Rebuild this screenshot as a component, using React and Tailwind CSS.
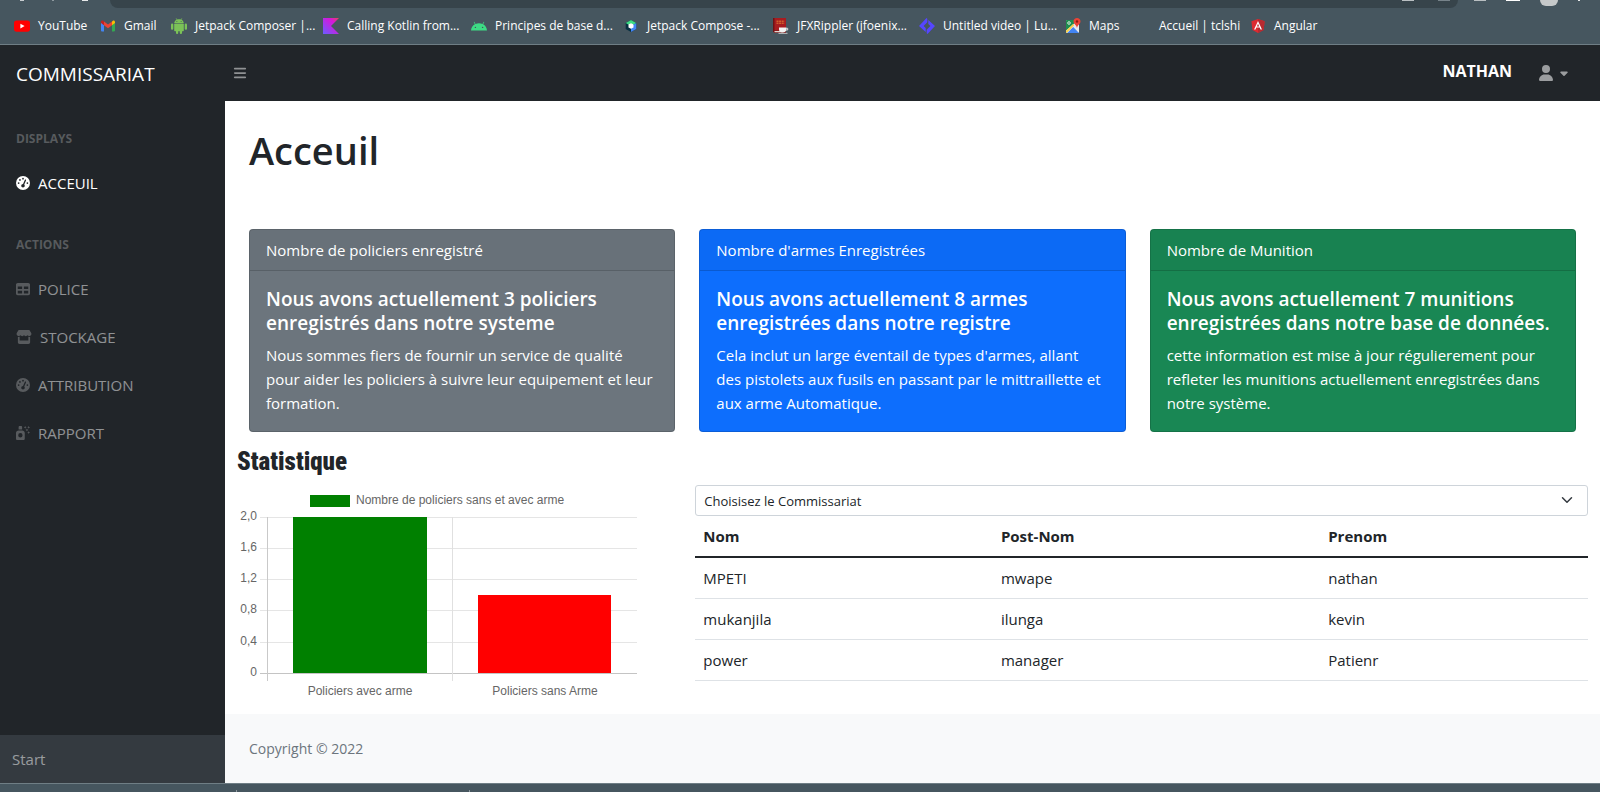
import React from "react";
import { FaBars, FaGaugeHigh, FaTable, FaStore, FaSprayCanSparkles, FaUser, FaCaretDown } from "react-icons/fa6";

const YoutubeIcon = () => (
  <svg viewBox="0 0 16 16" className="size-4 shrink-0">
    <rect x="0" y="2.5" width="16" height="11.2" rx="2.6" fill="#f00" />
    <path d="M6.4 5.7 10.6 8l-4.2 2.4z" fill="#fff" />
  </svg>
);

const GmailIcon = () => (
  <svg viewBox="0 0 16 16" className="size-4 shrink-0">
    <path d="M1 4v8.6c0 .5.4.9.9.9H4V7z" fill="#4285f4" />
    <path d="M15 4v8.6c0 .5-.4.9-.9.9H12V7z" fill="#34a853" />
    <path d="M12 3.6V7.2L15 5V4c0-1.500-1.500-2-2.400-1.100z" fill="#fbbc04" />
    <path d="M4 7.200V3.600L8 6.600l4-3v3.600l-4 3z" fill="#ea4335" />
    <path d="M1 4v1l3 2.200V3.600l-.6-.7C2.500 2 1 2.500 1 4z" fill="#c5221f" />
  </svg>
);

const AndroidIcon = () => (
  <svg viewBox="0 0 16 16" className="size-4 shrink-0" fill="#7bc257">
    <path d="M3.200 5.200C3.300 3.600 4.200 2.400 5.500 1.700L4.700.3l.4-.2.8 1.400c1.300-.5 2.900-.5 4.200 0l.8-1.400.4.2-.8 1.400c1.300.7 2.200 1.900 2.300 3.500z" />
    <rect x="3.200" y="5.700" width="9.600" height="7.600" rx=".8" />
    <rect x="0" y="5.600" width="2.300" height="6.200" rx="1.100" />
    <rect x="13.700" y="5.600" width="2.300" height="6.200" rx="1.100" />
    <rect x="5" y="11" width="2.200" height="5" rx="1" />
    <rect x="8.800" y="11" width="2.200" height="5" rx="1" />
    <circle cx="5.900" cy="3.500" r=".5" fill="#46565f" />
    <circle cx="10.100" cy="3.500" r=".5" fill="#46565f" />
  </svg>
);

const KotlinIcon = () => (
  <svg viewBox="0 0 16 16" className="size-4 shrink-0">
    <defs>
      <linearGradient id="kotlin" x1="1" y1="0" x2="0" y2="1">
        <stop offset="0" stopColor="#e44857" />
        <stop offset=".3" stopColor="#d816d8" />
        <stop offset="1" stopColor="#6a5cff" />
      </linearGradient>
    </defs>
    <path d="M0 0h16L8 8l8 8H0z" fill="url(#kotlin)" />
  </svg>
);

const AndroidHeadIcon = () => (
  <svg viewBox="0 0 16 16" className="size-4 shrink-0">
    <path d="M0 12.400C.2 9.800 1.700 7.500 3.900 6.300L2.700 4.100l.6-.3 1.200 2.200c2.200-1 4.800-1 7 0l1.200-2.200.6.300-1.200 2.200c2.200 1.200 3.700 3.500 3.900 6.100z" fill="#3ddc84" />
    <circle cx="4.400" cy="9.400" r=".7" fill="#46565f" />
    <circle cx="11.600" cy="9.400" r=".7" fill="#46565f" />
  </svg>
);

const ComposeIcon = () => (
  <svg viewBox="0 0 16 16" className="size-4 shrink-0">
    <path d="M8 2 13.300 5v6L8 14 2.700 11V5z" fill="#083042" />
    <path d="M8 2 13.300 5 8 8 2.700 5z" fill="#3ddc84" />
    <path d="M13.300 5v6L8 14V8z" fill="#4285f4" />
    <path d="m8 5.200 2.500 1.400v2.800L8 10.800 5.500 9.400V6.600z" fill="#fff" />
  </svg>
);

const BookIcon = () => (
  <svg viewBox="0 0 16 16" className="size-4 shrink-0">
    <path d="M0 0h13v15H1.500L0 13.500z" fill="#701214" />
    <path d="M1.500 0H13v12.500H1.500z" fill="#a81c20" />
    <path d="M1.500 13h8v1.300h-8z" fill="#ded6d0" />
    <path d="M3.500 3.200h8M3.500 5.200h8" stroke="#e88b36" strokeWidth=".9" strokeDasharray="2 .6" />
    <path d="M6 9.500h7.300v2c0 2-1.500 3-3.600 3s-3.700-1-3.700-3z" fill="#f3f3f3" />
    <path d="M13 10.300h1.700v1.700H13" fill="none" stroke="#f3f3f3" strokeWidth=".8" />
    <path d="M5.500 15.300h9" stroke="#c9c9c9" strokeWidth="1" />
  </svg>
);

const LumenIcon = () => (
  <svg viewBox="0 0 16 16" className="size-4 shrink-0" fill="#5546ff">
    <path d="M7.500 0 8.300.8V4.300L4.600 8l2.100 2.100v4L0 8z" />
    <path d="M8.500 16 7.700 15.200V11.700L11.400 8 9.300 5.900v-4L16 8z" />
  </svg>
);

const MapsIcon = () => (
  <svg viewBox="0 0 16 16" className="size-4 shrink-0">
    <rect x="1" y="2" width="13" height="13" rx="1" fill="#e8eaed" />
    <path d="M1 3c0-.600.400-1 1-1h9v2L1 12.500z" fill="#1e8e4e" />
    <path d="m2.200 15 6-6 5.800 6z" fill="#4285f4" />
    <path d="M1 12.800 8 6l1.200 1.200L1.800 15 1 14z" fill="#fbd24b" />
    <circle cx="4" cy="5" r="1.300" fill="none" stroke="#fff" strokeWidth=".8" />
    <path d="M12 0c2 0 3.500 1.500 3.500 3.500C15.500 6 12.500 7 12 10c-.5-3-3.500-4-3.500-6.500C8.500 1.500 10 0 12 0z" fill="#ea4335" />
    <circle cx="12" cy="3.500" r="1.200" fill="#8e1b12" />
  </svg>
);

const AngularIcon = () => (
  <svg viewBox="0 0 16 16" className="size-4 shrink-0">
    <path d="M8 .9 14.600 3.200l-1 8.800L8 15.100 2.400 12l-1-8.800z" fill="#dd2b31" />
    <path d="M8 .9 14.600 3.200l-1 8.800L8 15.100z" fill="#b72a30" />
    <path d="m8 3-4 8.600h1.500l.8-2h3.400l.8 2H12zm0 2.700 1.200 2.700H6.800z" fill="#fff" />
  </svg>
);

const NoIcon = () => <span className="size-4 shrink-0" />;

const bookmarks = [
  { label: "YouTube", Icon: YoutubeIcon, width: "w-[86px]" },
  { label: "Gmail", Icon: GmailIcon, width: "w-[71px]" },
  { label: "Jetpack Composer |...", Icon: AndroidIcon, width: "w-[152px]" },
  { label: "Calling Kotlin from...", Icon: KotlinIcon, width: "w-[148px]" },
  { label: "Principes de base d...", Icon: AndroidHeadIcon, width: "w-[152px]" },
  { label: "Jetpack Compose -...", Icon: ComposeIcon, width: "w-[150px]" },
  { label: "JFXRippler (jfoenix...", Icon: BookIcon, width: "w-[146px]" },
  { label: "Untitled video | Lu...", Icon: LumenIcon, width: "w-[146px]" },
  { label: "Maps", Icon: MapsIcon, width: "w-[70px]" },
  { label: "Accueil | tclshi", Icon: NoIcon, width: "w-[115px]" },
  { label: "Angular", Icon: AngularIcon, width: "w-[80px]" },
];

function BrowserBar() {
  return (
    <div className="border-b border-[#6f7e85] bg-[#46565f]">
      <div className="flex h-2 items-start overflow-hidden pr-5">
        <div className="flex w-[110px] shrink-0 gap-7 pl-5">
          <span className="h-px w-1 bg-[#c8cdd0]" />
          <span className="h-px w-0.5 bg-[#8d989e]" />
          <span className="h-px w-1.5 bg-[#e8eaeb]" />
        </div>
        <div className="flex h-2 flex-1 items-start justify-end gap-6 rounded-b-lg bg-[#37444b] pr-2">
          <span className="h-px w-3 bg-[#b9bfc2]" />
          <span className="h-px w-3 bg-[#77838a]" />
        </div>
        <div className="flex shrink-0 items-start gap-5 pl-4">
          <span className="h-px w-3 bg-[#b9bfc2]" />
          <span className="h-px w-3.5 bg-white" />
          <span className="h-1.5 w-[18px] rounded-b-full bg-[#c6c9ca]" />
          <span className="h-px w-0.5 bg-[#e8eaeb]" />
        </div>
      </div>
      <nav aria-label="Favoris" className="flex h-9 items-center pl-3.5 text-[12px] text-white">
        {bookmarks.map(({ label, Icon, width }) => (
          <a key={label} href="#" className={`flex shrink-0 items-center gap-2 whitespace-nowrap ${width}`}>
            <Icon />
            {label}
          </a>
        ))}
      </nav>
    </div>
  );
}

function TopNav() {
  return (
    <header className="flex h-14 items-center bg-[#212529]">
      <a href="#" className="w-[225px] shrink-0 pt-0.5 pl-4 text-[19px] text-white">COMMISSARIAT</a>
      <button type="button" aria-label="Menu" className="p-2 text-[14px] text-white/50">
        <FaBars />
      </button>
      <div className="ml-auto flex items-center pr-[30px]">
        <span className="pb-1 text-[16px] font-bold text-white">NATHAN</span>
        <button type="button" aria-label="Compte" className="ml-[26px] flex items-center gap-1 text-white/55">
          <FaUser className="size-4" />
          <FaCaretDown className="size-3" />
        </button>
      </div>
    </header>
  );
}

const sections = [
  { title: "DISPLAYS", links: [{ label: "ACCEUIL", Icon: FaGaugeHigh, active: true }] },
  {
    title: "ACTIONS",
    links: [
      { label: "POLICE", Icon: FaTable },
      { label: "STOCKAGE", Icon: FaStore, wide: true },
      { label: "ATTRIBUTION", Icon: FaGaugeHigh },
      { label: "RAPPORT", Icon: FaSprayCanSparkles },
    ],
  },
];

function Sidebar() {
  return (
    <aside className="flex w-[225px] shrink-0 flex-col bg-[#212529]">
      <nav className="flex-1">
        {sections.map((section) => (
          <div key={section.title}>
            <h2 className="px-4 pt-7 pb-2.5 text-[12px] leading-5 font-bold text-white/25">{section.title}</h2>
            {section.links.map(({ label, Icon, active, wide }) => (
              <a
                key={label}
                href="#"
                className={`flex h-12 items-center gap-2 px-4 text-[15px] ${active ? "text-white" : "text-white/50"}`}
              >
                <Icon className={`h-3.5 ${wide ? "w-4" : "w-3.5"} ${active ? "text-white" : "text-white/25"}`} />
                {label}
              </a>
            ))}
          </div>
        ))}
      </nav>
      <div className="flex h-12 items-center bg-[#343a40] px-3 text-[15px] text-white/50">Start</div>
    </aside>
  );
}

const cards = [
  {
    header: "Nombre de policiers enregistré",
    title: "Nous avons actuellement 3 policiers enregistrés dans notre systeme",
    text: "Nous sommes fiers de fournir un service de qualité pour aider les policiers à suivre leur equipement et leur formation.",
    color: "bg-[#6c757d]",
  },
  {
    header: "Nombre d'armes Enregistrées",
    title: "Nous avons actuellement 8 armes enregistrées dans notre registre",
    text: "Cela inclut un large éventail de types d'armes, allant des pistolets aux fusils en passant par le mittraillette et aux arme Automatique.",
    color: "bg-[#0d6efd]",
  },
  {
    header: "Nombre de Munition",
    title: "Nous avons actuellement 7 munitions enregistrées dans notre base de données.",
    text: "cette information est mise à jour régulierement pour refleter les munitions actuellement enregistrées dans notre système.",
    color: "bg-[#198754]",
  },
];

function StatCard({ header, title, text, color }) {
  return (
    <article className={`overflow-hidden rounded border border-black/15 text-white ${color}`}>
      <div className="border-b border-black/15 bg-black/3 px-4 py-2 text-[15px] leading-6">{header}</div>
      <div className="py-4 pr-5 pl-4">
        <h3 className="mb-2 text-[19px] leading-6 font-semibold">{title}</h3>
        <p className="text-[15px] leading-6">{text}</p>
      </div>
    </article>
  );
}

const ticks = [
  { label: "2,0", y: 32 },
  { label: "1,6", y: 63 },
  { label: "1,2", y: 94 },
  { label: "0,8", y: 125 },
  { label: "0,4", y: 157 },
  { label: "0", y: 188 },
];

function Chart() {
  return (
    <svg
      viewBox="0 0 400 216"
      width="400"
      height="216"
      role="img"
      aria-label="Nombre de policiers sans et avec arme"
      fontFamily="'Liberation Sans', Arial, sans-serif"
      fontSize="12"
      fill="#666"
    >
      <rect x="73" y="10" width="40" height="12" fill="#008000" />
      <text x="119" y="19">Nombre de policiers sans et avec arme</text>
      {ticks.map(({ label, y }) => (
        <g key={label}>
          <rect x="23" y={y} width="377" height="1" fill={y === 188 ? "#c4c4c4" : "#e5e5e5"} />
          <text x="20" y={y + 3} textAnchor="end">{label}</text>
        </g>
      ))}
      <rect x="30" y="32" width="1" height="164" fill="#c9c9c9" />
      <rect x="215" y="32" width="1" height="164" fill="#e0e0e0" />
      <rect x="56" y="32" width="134" height="156" fill="#008000" />
      <rect x="241" y="110" width="133" height="78" fill="#f00" />
      <text x="123" y="210" textAnchor="middle">Policiers avec arme</text>
      <text x="308" y="210" textAnchor="middle">Policiers sans Arme</text>
    </svg>
  );
}

const rows = [
  ["MPETI", "mwape", "nathan"],
  ["mukanjila", "ilunga", "kevin"],
  ["power", "manager", "Patienr"],
];

function Officers() {
  return (
    <div className="col-span-2 px-3">
      <div className="relative">
        <select
          aria-label="Commissariat"
          className="block h-[31px] w-full appearance-none rounded-[3px] border border-[#ced4da] bg-white pt-0.5 pr-9 pl-2 text-[13px] text-[#212529]"
        >
          <option>Choisisez le Commissariat</option>
        </select>
        <svg
          viewBox="0 0 16 16"
          className="pointer-events-none absolute top-[9px] right-[13px] h-3 w-4"
          fill="none"
          stroke="#343a40"
          strokeWidth="2"
          strokeLinecap="round"
          strokeLinejoin="round"
        >
          <path d="m2 5 6 6 6-6" />
        </svg>
      </div>
      <table className="w-full table-fixed border-collapse text-left text-[15px] leading-6">
        <thead>
          <tr className="border-b-2 border-[#212529]">
            <th className="w-1/3 p-2 font-bold">Nom</th>
            <th className="p-2 font-bold">Post-Nom</th>
            <th className="w-[30%] p-2 font-bold">Prenom</th>
          </tr>
        </thead>
        <tbody>
          {rows.map((row) => (
            <tr key={row[0]} className="border-b border-[#dee2e6]">
              {row.map((cell) => (
                <td key={cell} className="p-2">{cell}</td>
              ))}
            </tr>
          ))}
        </tbody>
      </table>
    </div>
  );
}

export default function App() {
  return (
    <div className="flex min-h-screen flex-col bg-white font-['Segoe_UI','Open_Sans',sans-serif] text-[#212529]">
      <BrowserBar />
      <TopNav />
      <div className="flex flex-1">
        <Sidebar />
        <div className="flex min-w-0 flex-1 flex-col">
          <main className="flex-1">
            <h1 className="px-6 pt-6 text-[38px] leading-[50px] font-semibold">Acceuil</h1>
            <div className="mt-[54px] grid grid-cols-3 gap-6 px-6">
              {cards.map((card) => (
                <StatCard key={card.header} {...card} />
              ))}
            </div>
            <h2 className="mt-4 px-3 font-['Impact','Roboto_Condensed','Open_Sans_Condensed','Roboto',sans-serif] text-[25px] leading-7 font-black">
              Statistique
            </h2>
            <div className="mt-[9px] grid grid-cols-3">
              <div className="px-3">
                <Chart />
              </div>
              <Officers />
            </div>
          </main>
          <footer className="bg-[#f8f9fa] px-6 py-6 text-[14px] leading-[21px] text-[#6c757d]">Copyright © 2022</footer>
        </div>
      </div>
      <div className="flex h-[9px] items-end border-t border-[#6f7e85] bg-[#46565f]">
        <span className="ml-[236px] h-0.5 w-px bg-[#8d989e]" />
        <span className="ml-[232px] h-0.5 w-px bg-[#8d989e]" />
      </div>
    </div>
  );
}
